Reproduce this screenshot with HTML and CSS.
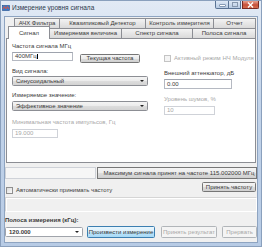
FILE: index.html
```html
<!DOCTYPE html>
<html lang="ru">
<head>
    <meta charset="UTF-8">
    <link rel="stylesheet" href="styles.css">
</head>
<body>
    <div class="window">
        <div class="titlebar">
            <svg class="appIcon" width="8" height="8" viewBox="0 0 8 8">
                <rect x="0.5" y="1.5" width="7" height="5" fill="#3a78c8" stroke="#1d4c8a" stroke-width="0.6"/>
                <path d="M1 5 L2.5 2.5 L4 5 L5.5 2.5 L7 5" fill="none" stroke="#f05030" stroke-width="0.9"/>
            </svg>
            <span class="title">Измерение уровня сигнала</span>
            <div class="controls">
                <div class="ctl minBtn"><span class="dash"></span></div>
                <div class="ctl maxBtn"><span class="square"></span></div>
                <div class="ctl closeBtn">
                    <svg width="7" height="6" viewBox="0 0 7 6">
                        <path d="M1 0.5 L6 5.5 M6 0.5 L1 5.5" stroke="#fff" stroke-width="1.4"/>
                    </svg>
                </div>
            </div>
        </div>
        <div class="client">
            <div class="tabs">
                <div class="tabRow back">
                    <div class="tab">АЧХ Фильтра</div>
                    <div class="tab">Квазипиковый Детектор</div>
                    <div class="tab">Контроль измерителя</div>
                    <div class="tab">Отчет</div>
                </div>
                <div class="tabRow front">
                    <div class="tab active">Сигнал</div>
                    <div class="tab">Измеряемая величина</div>
                    <div class="tab">Спектр сигнала</div>
                    <div class="tab">Полоса сигнала</div>
                </div>
            </div>
            <div class="page">
                <div class="colLeft">
                    <div class="lbl first">Частота сигнала МГц</div>
                    <div class="freqRow">
                        <div class="edit freqEdit">400МГц<span class="caret"></span></div>
                        <div class="btn curBtn">Текущая частота</div>
                    </div>
                    <div class="lbl kindLbl">Вид сигнала:</div>
                    <div class="combo kindCombo">Синусоидальный<span class="arrow"></span></div>
                    <div class="lbl valLbl">Измеряемое значение:</div>
                    <div class="combo valCombo">Эффективное значение<span class="arrow"></span></div>
                    <div class="lbl dis minLbl">Минимальная частота импульсов, Гц</div>
                    <div class="edit dis minEdit">19.000</div>
                </div>
                <div class="colRight">
                    <div class="check dis lfCheck"><span class="box"></span>Активный режим НЧ Модуля</div>
                    <div class="lbl attLbl">Внешний аттенюатор, дБ</div>
                    <div class="edit attEdit">0.00</div>
                    <div class="lbl dis noiseLbl">Уровень шумов, %</div>
                    <div class="edit dis noiseEdit">10</div>
                </div>
            </div>
            <div class="maxRow">
                <div class="edit dis maxField"></div>
                <div class="btn maxBtnWide">Максимум сигнала принят на частоте 115.002000 МГц</div>
            </div>
            <div class="autoRow">
                <div class="check autoCheck"><span class="box"></span>Автоматически принимать частоту</div>
                <div class="btn acceptBtn">Принять частоту</div>
            </div>
            <div class="blankBox"></div>
            <div class="bandLbl">Полоса измерения (кГц):</div>
            <div class="bottomRow">
                <div class="combo bandCombo">120.000<span class="arrow"></span></div>
                <div class="btn focused runBtn">Произвести измерение</div>
                <div class="btn dis resBtn">Принять результат</div>
                <div class="btn dis stopBtn">Прервать</div>
            </div>
        </div>
    </div>
</body>
</html>
```
FILE: styles.css
```css
html, body {
    margin: 0;
    padding: 0;
}

body {
    font-family: 'Liberation Sans', Arial, sans-serif;
    font-size: 6px;
    color: #3a3a3a;
}

.window {
    width: 262px;
    height: 247px;
    box-sizing: border-box;
    display: flex;
    flex-direction: column;
    background: linear-gradient(#e2eaf5, #c3d4ea 40%, #b7cbe5);
    border: 1px solid #8aa0bd;
}

.titlebar {
    height: 15px;
    display: flex;
    align-items: flex-start;
    flex: none;
}

.appIcon {
    margin: 3px 0 0 1px;
}

.title {
    margin: 3px 0 0 2px;
    font-size: 6.5px;
    line-height: 8px;
    color: #2c3a4e;
}

.controls {
    margin-left: auto;
    display: flex;
    margin-right: 2px;
}

.ctl {
    height: 8px;
    box-sizing: border-box;
    border: 1px solid #5a7394;
    border-top: none;
    display: flex;
    align-items: center;
    justify-content: center;
}

.minBtn {
    width: 14px;
    border-radius: 0 0 0 2px;
    background: linear-gradient(#dfe9f6, #b8cbe3);
}

.dash {
    width: 5px;
    height: 1px;
    background: #fff;
    box-shadow: 0 0 0 0.5px #455d7e;
    margin-top: 2px;
}

.maxBtn {
    width: 12px;
    border-left: none;
    background: linear-gradient(#dfe9f6, #b8cbe3);
}

.square {
    width: 4px;
    height: 3px;
    border: 1px solid #8797ad;
}

.closeBtn {
    width: 17px;
    margin-left: 1px;
    border-color: #7a2a22;
    border-radius: 0 0 2px 0;
    background: linear-gradient(#e8a493, #c7503a 55%, #d36b4e);
}

.client {
    flex: 1;
    margin: 0 3px 3px 3px;
    background: #f0f0f0;
    border: 1px solid #8ea4c1;
    display: flex;
    flex-direction: column;
}

/* tabs */

.tabs {
    margin: 1px 0 0 1px;
}

.tabRow {
    display: flex;
    height: 10px;
}

.tabRow.back {
    padding-left: 8px;
}

.tabRow.front {
    padding-left: 2px;
}

.tab {
    box-sizing: border-box;
    height: 10px;
    line-height: 9px;
    text-align: center;
    white-space: nowrap;
    border: 1px solid #8c8e94;
    border-bottom: none;
    border-left: none;
    background: linear-gradient(#f3f3f3, #e6e6e6 50%, #dadada);
}

.tab:first-child {
    border-left: 1px solid #8c8e94;
}

.back .tab:nth-child(1) { width: 46px; }
.back .tab:nth-child(2) { width: 86px; }
.back .tab:nth-child(3) { width: 68px; }
.back .tab:nth-child(4) { width: 42px; }

.front .tab:nth-child(1) { width: 42px; }
.front .tab:nth-child(2) { width: 72px; }
.front .tab:nth-child(3) { width: 71px; }
.front .tab:nth-child(4) { width: 63px; }

.tab.active {
    height: 13px;
    margin-top: -2px;
    line-height: 12px;
    background: #fff;
    position: relative;
    z-index: 1;
}

.page {
    height: 125px;
    box-sizing: border-box;
    margin: 0 1px 0 1px;
    background: #fff;
    border: 1px solid #8c8e94;
    padding-left: 5px;
    display: flex;
}

.lbl {
    height: 7px;
    line-height: 7px;
    white-space: nowrap;
}

.dis {
    color: #a8a8a8;
}

.colLeft {
    width: 136px;
    display: flex;
    flex-direction: column;
    align-items: flex-start;
}

.colRight {
    margin-left: 16px;
    display: flex;
    flex-direction: column;
    align-items: flex-start;
}

.first { margin-top: 4px; }

.freqRow {
    display: flex;
    align-items: flex-start;
    margin-top: 2px;
}

.edit {
    box-sizing: border-box;
    height: 9px;
    line-height: 7px;
    padding-left: 2px;
    background: #fff;
    border: 1px solid #b5b9c2;
    border-top-color: #9ea3ad;
    white-space: nowrap;
}

.edit.dis {
    border-color: #cfd2d8;
}

.caret {
    display: inline-block;
    width: 0.5px;
    height: 5px;
    background: #000;
    vertical-align: -1px;
}

.freqEdit { width: 61px; }

.btn {
    box-sizing: border-box;
    height: 9px;
    line-height: 7px;
    text-align: center;
    white-space: nowrap;
    border: 1px solid #767676;
    border-radius: 1.5px;
    background: linear-gradient(#f4f4f4, #ebebeb 50%, #dddddd 51%, #cfcfcf);
}

.btn.dis {
    border-color: #b1b5b9;
    background: #f4f4f4;
}

.btn.focused {
    border-color: #3c7fb1;
    background: linear-gradient(#eaf6fd, #d9f0fc 50%, #bee6fd 51%, #a7d9f5);
}

.curBtn {
    width: 60px;
    margin: 2px 0 0 7px;
}

.kindLbl { margin-top: 5px; }

.combo {
    box-sizing: border-box;
    width: 136px;
    height: 10px;
    line-height: 8px;
    padding-left: 3px;
    border: 1px solid #8c8e94;
    border-radius: 1.5px;
    background: linear-gradient(#f4f4f4, #ebebeb 50%, #dddddd 51%, #d3d3d3);
    display: flex;
    white-space: nowrap;
}

.arrow {
    margin: 3px 3px 0 auto;
    width: 0;
    height: 0;
    border-left: 2px solid transparent;
    border-right: 2px solid transparent;
    border-top: 2px solid #222;
}

.kindCombo { margin-top: 1px; }
.valLbl { margin-top: 6px; }
.valCombo { margin-top: 2px; }
.minLbl { margin-top: 8px; }

.minEdit {
    width: 46px;
    margin-top: 3px;
}

.check {
    display: flex;
    align-items: center;
    height: 8px;
    white-space: nowrap;
}

.box {
    width: 7px;
    height: 7px;
    box-sizing: border-box;
    border: 1px solid #8f8f8f;
    background: linear-gradient(135deg, #dcdcdc, #fafafa);
    margin-right: 3px;
}

.check.dis .box {
    border-color: #c4c4c4;
    background: #f4f4f4;
}

.lfCheck { margin-top: 15px; }
.attLbl { margin-top: 8px; }

.attEdit {
    width: 68px;
    height: 10px;
    line-height: 8px;
    margin-top: 2px;
}

.noiseLbl { margin-top: 7px; }

.noiseEdit {
    width: 51px;
    margin-top: 3px;
}

/* below the tab page */

.maxRow {
    display: flex;
    margin-top: 4px;
    height: 12px;
}

.maxField {
    width: 91px;
    height: 12px;
    background: #f6f6f6;
}

.maxBtnWide {
    flex: 1;
    height: 12px;
    line-height: 10px;
    margin-left: 1px;
    border-radius: 0;
    padding-left: 4px;
}

.autoRow {
    display: flex;
    align-items: flex-start;
    margin-top: 3px;
    height: 12px;
}

.autoCheck {
    margin: 4px 0 0 1px;
}

.acceptBtn {
    margin-left: auto;
    width: 54px;
    height: 10px;
    line-height: 8px;
    margin-right: 1px;
}

.blankBox {
    height: 15px;
    box-sizing: border-box;
    margin-top: 3px;
    border: 1px solid #d5d5d5;
    border-right-color: #fff;
    border-bottom-color: #fff;
    box-shadow: inset 1px 1px 0 #fff;
}

.bandLbl {
    margin: 5px 0 0 0;
    height: 7px;
    line-height: 7px;
    font-weight: bold;
    white-space: nowrap;
}

.bottomRow {
    display: flex;
    align-items: flex-start;
    margin-top: 2px;
}

.bandCombo {
    width: 78px;
    margin-top: 1px;
    font-weight: bold;
    border-color: #a0a4ab;
    background: #fff;
}

.runBtn {
    width: 68px;
    height: 12px;
    line-height: 10px;
    margin-left: 4px;
}

.resBtn {
    width: 56px;
    height: 12px;
    line-height: 10px;
    margin-left: 6px;
}

.stopBtn {
    width: 35px;
    height: 12px;
    line-height: 10px;
    margin-left: auto;
}
```
